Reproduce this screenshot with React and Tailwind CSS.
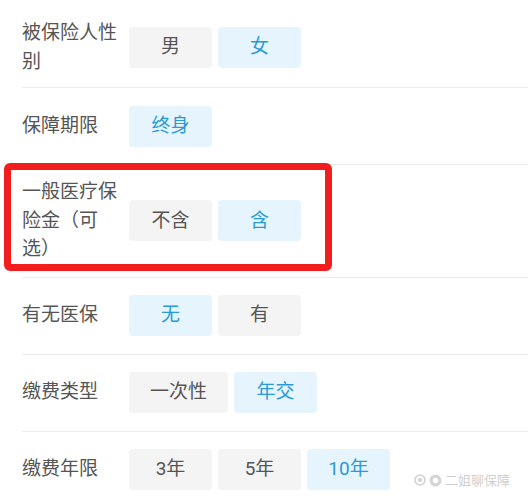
import React from "react";

const rows = [
  { label: ["被保险人性", "别"], options: ["男", "女"], active: 1, py: "pt-[13px] pb-[11px]" },
  { label: ["保障期限"], options: ["终身"], active: 0, py: "py-[17.5px]" },
  { label: ["一般医疗保", "险金（可", "选）"], options: ["不含", "含"], active: 1, py: "py-[13px]", marked: true },
  { label: ["有无医保"], options: ["无", "有"], active: 0, py: "py-[17.5px]" },
  { label: ["缴费类型"], options: ["一次性", "年交"], active: 1, py: "py-[17.5px]" },
  { label: ["缴费年限"], options: ["3年", "5年", "10年"], active: 2, py: "py-[17.5px]", last: true },
];

function Option({ text, active }) {
  return (
    <div
      className={
        active
          ? "h-[41px] min-w-[83px] px-[21px] flex items-center justify-center rounded-[4px] bg-[#e6f5fd] text-[#2a9ad4]"
          : "h-[41px] min-w-[83px] px-[21px] flex items-center justify-center rounded-[4px] bg-[#f4f4f4] text-[#555555]"
      }
    >
      {text}
    </div>
  );
}

export default function App() {
  return (
    <div
      className="relative w-[528px] h-[500px] bg-white overflow-hidden pt-[6px] text-[19px]"
      style={{ fontFamily: '"Roboto", "Noto Sans CJK SC", sans-serif' }}
    >
      {rows.map((row, i) => (
        <div
          key={i}
          className={
            "relative ml-[22px] flex items-center " +
            row.py +
            (row.last ? "" : " border-b border-[#ececec]")
          }
        >
          <div className="w-[107px] shrink-0 leading-[28.5px] text-[#555555] whitespace-nowrap">
            {row.label.map((line, k) => (
              <div key={k}>{line}</div>
            ))}
          </div>
          <div className="flex gap-[6px]">
            {row.options.map((opt, j) => (
              <Option key={j} text={opt} active={j === row.active} />
            ))}
          </div>
          {row.marked && (
            <div className="absolute left-[-18px] top-[-2px] w-[328px] h-[108px] border-[7px] border-[#f21d1d] rounded-[6px] pointer-events-none" />
          )}
        </div>
      ))}
      <div className="absolute right-[18px] bottom-[10px] flex items-center gap-[3px] text-[13px] text-[#cfcfcf]">
        <svg width="12" height="12" viewBox="0 0 12 12">
          <circle cx="6" cy="6" r="5" fill="none" stroke="#d0d0d0" strokeWidth="1.5" />
          <circle cx="6" cy="6" r="2" fill="#d0d0d0" />
        </svg>
        <svg width="13" height="13" viewBox="0 0 12 12">
          <circle cx="6" cy="6" r="5.5" fill="#d5d5d5" />
          <circle cx="6" cy="6" r="2.5" fill="#ffffff" />
        </svg>
        <span>二姐聊保障</span>
      </div>
    </div>
  );
}
